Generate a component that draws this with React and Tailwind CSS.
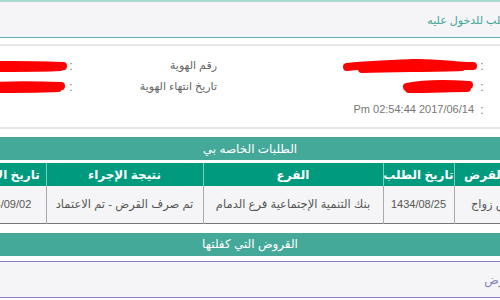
import React from 'react';

const arabic = "font-['Liberation_Sans','DejaVu_Sans',sans-serif]";

const Scribble = ({ w, h, d, className = '' }) => (
  <svg width={w} height={h} viewBox={`0 0 ${w} ${h}`} className={`shrink-0 ${className}`}>
    <path d={d} fill="none" stroke="#ff0000" strokeWidth="8" strokeLinecap="round" strokeLinejoin="round" />
  </svg>
);

const InfoRow = ({ label, children, valueClass = '', rowClass = '' }) => (
  <div className={`flex h-[21px] items-center ${rowClass}`}>
    <div className="w-[143px] shrink-0 text-right text-[11px] text-[#666]">{label}</div>
    <div className="w-[6px] shrink-0 text-center text-[12px] text-[#777]">:</div>
    <div className={`flex min-w-0 flex-1 items-center ${valueClass}`}>{children}</div>
  </div>
);

export default function App() {
  return (
    <div className={`h-[300px] w-[500px] overflow-hidden bg-white ${arabic}`}>
      {/* page title panel */}
      <div dir="rtl" className="ml-[-38px] w-[576px]">
        <div className="flex h-[38px] items-center border-t-2 border-b border-t-[#a9dad1] border-b-[#5fb3a8] bg-[#f5f5f7] pr-[22px] pt-[2px]">
          <span className="text-[11px] text-[#3ea496]">الطلب للدخول عليه</span>
        </div>
      </div>

      {/* identity info */}
      <div dir="rtl" className="mt-[6px] ml-[-194px] h-[85px] w-[822px] border-y-2 border-[#e8e8e8] bg-white pt-[9px]">
        <div className="flex">
          <div className="w-[411px]">
            <InfoRow label="">
              <Scribble w={136} h={16} className="mr-[1px]" d="M5 9 C30 6 50 6 70 5 C95 4 110 8 131 8 M20 11 C60 10 90 10 120 9" />
            </InfoRow>
            <InfoRow label="">
              <Scribble w={74} h={15} className="mr-[4px]" d="M6 8 C20 5 40 4 68 6 M8 10 C30 10 50 9 66 9" />
            </InfoRow>
            <InfoRow label="" rowClass="pt-[4px]">
              <span className="pr-[5px] text-[11px] text-[#777]" dir="ltr">Pm 02:54:44 2017/06/14</span>
            </InfoRow>
          </div>
          <div className="w-[411px]">
            <InfoRow label="رقم الهوية">
              <Scribble w={96} h={14} d="M5 7 C30 5 60 6 91 7 M10 9 C40 9 70 9 88 8" />
            </InfoRow>
            <InfoRow label="تاريخ انتهاء الهوية">
              <Scribble w={96} h={14} className="mr-[2px]" d="M5 7 C30 5 60 5 91 6 M10 9 C40 9 70 9 88 8" />
            </InfoRow>
          </div>
        </div>
      </div>

      <div dir="rtl" className="ml-[-38px] mt-[8px] w-[576px]">
        {/* my requests */}
        <div className="flex h-[23px] items-center justify-center bg-[#45a99a] text-[12px] text-white">الطلبات الخاصه بي</div>
        <table className="mt-[3px] w-full table-fixed border-collapse text-center">
          <thead>
            <tr className="h-[23px] whitespace-nowrap bg-[#009b7e] text-[12px] text-white">
              <th className="w-[84px] border-l border-[#7fcdbf] font-bold">نوع القرض</th>
              <th className="w-[71px] border-l border-[#7fcdbf] font-bold">تاريخ الطلب</th>
              <th className="w-[180px] border-l border-[#7fcdbf] font-bold">الفرع</th>
              <th className="w-[157px] border-l border-[#7fcdbf] font-bold">نتيجة الإجراء</th>
              <th className="font-bold">تاريخ الإجراء</th>
            </tr>
          </thead>
          <tbody>
            <tr className="h-[37px] whitespace-nowrap border-b border-[#777] bg-[#f5f5f7] text-[11.5px] text-[#555]">
              <td className="border-l border-[#aaa]">قرض زواج</td>
              <td className="border-l border-[#aaa] text-[11px]">1434/08/25</td>
              <td className="border-l border-[#aaa]">بنك التنمية الإجتماعية فرع الدمام</td>
              <td className="border-l border-[#aaa]">تم صرف القرض - تم الاعتماد</td>
              <td className="text-[11px]">1434/09/02</td>
            </tr>
          </tbody>
        </table>

        {/* guaranteed loans */}
        <div className="mt-[9px] flex h-[23px] items-center justify-center bg-[#45a99a] text-[12px] text-white">القروض التي كفلتها</div>
      </div>
      <div dir="rtl" className="ml-[-38px] mt-[5px] flex h-[37px] w-[608px] items-center border-y border-[#8a80c4] bg-[#f5f5f7] pr-[22px] pt-[2px]">
        <span className="text-[12px] text-[#7e82bf]">لا يوجد قرض</span>
      </div>
    </div>
  );
}
